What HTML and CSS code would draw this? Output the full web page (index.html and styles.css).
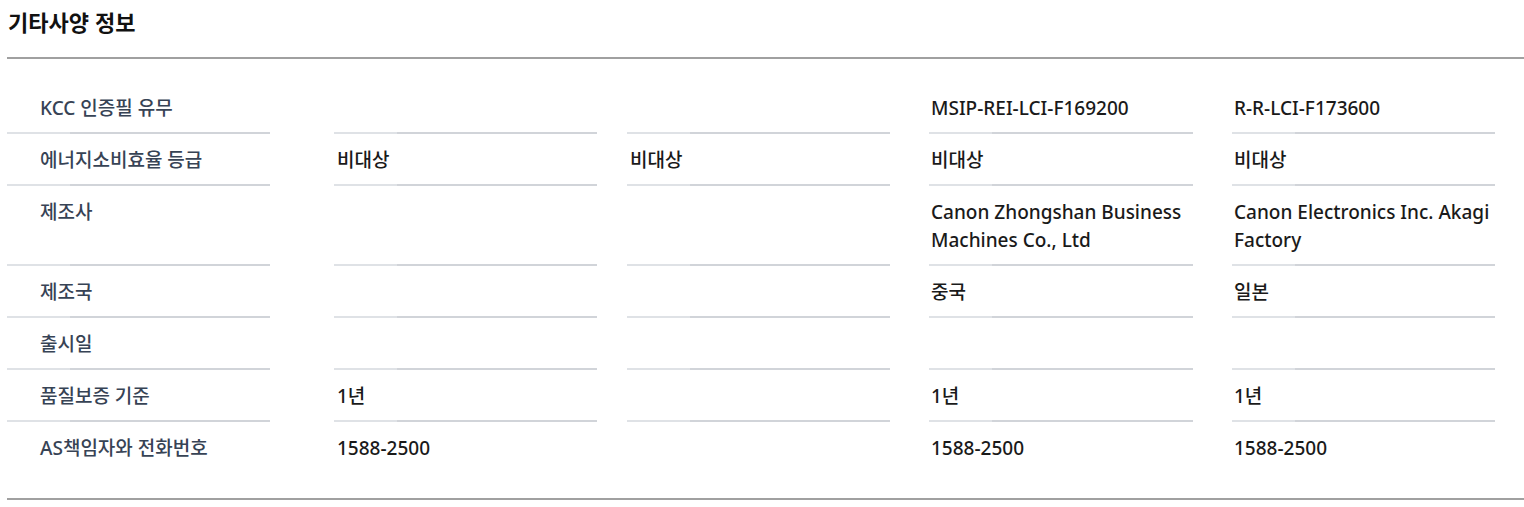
FILE: index.html
```html
<!DOCTYPE html>
<html lang="ko">
<head>
<meta charset="utf-8">
<title>기타사양 정보</title>
<link rel="stylesheet" href="styles.css">
</head>
<body>
<section class="spec">
  <h2 class="spec-title">기타사양 정보</h2>
  <div class="spec-table">
    <div class="row">
      <div class="cell label">KCC 인증필 유무</div>
      <div class="cell c2"></div>
      <div class="cell c3"></div>
      <div class="cell c4">MSIP-REI-LCI-F169200</div>
      <div class="cell c5">R-R-LCI-F173600</div>
    </div>
    <div class="row">
      <div class="cell label">에너지소비효율 등급</div>
      <div class="cell c2">비대상</div>
      <div class="cell c3">비대상</div>
      <div class="cell c4">비대상</div>
      <div class="cell c5">비대상</div>
    </div>
    <div class="row">
      <div class="cell label">제조사</div>
      <div class="cell c2"></div>
      <div class="cell c3"></div>
      <div class="cell c4">Canon Zhongshan Business Machines Co., Ltd</div>
      <div class="cell c5">Canon Electronics Inc. Akagi Factory</div>
    </div>
    <div class="row">
      <div class="cell label">제조국</div>
      <div class="cell c2"></div>
      <div class="cell c3"></div>
      <div class="cell c4">중국</div>
      <div class="cell c5">일본</div>
    </div>
    <div class="row">
      <div class="cell label">출시일</div>
      <div class="cell c2"></div>
      <div class="cell c3"></div>
      <div class="cell c4"></div>
      <div class="cell c5"></div>
    </div>
    <div class="row">
      <div class="cell label">품질보증 기준</div>
      <div class="cell c2">1년</div>
      <div class="cell c3"></div>
      <div class="cell c4">1년</div>
      <div class="cell c5">1년</div>
    </div>
    <div class="row last">
      <div class="cell label">AS책임자와 전화번호</div>
      <div class="cell c2">1588-2500</div>
      <div class="cell c3"></div>
      <div class="cell c4">1588-2500</div>
      <div class="cell c5">1588-2500</div>
    </div>
  </div>
</section>
</body>
</html>
```

FILE: styles.css
```css
html, body {
  margin: 0;
  padding: 0;
  background: #ffffff;
}

body {
  font-family: "Noto Sans", "Noto Sans CJK KR", sans-serif;
  color: #1a1a1a;
  overflow: hidden;
}

.spec {
  margin-left: 7px;
}

.spec-title {
  margin: 0;
  padding: 7px 0 22px 1px;
  font-family: "Noto Sans CJK KR", sans-serif;
  font-size: 22px;
  line-height: 28px;
  font-weight: 700;
  color: #111111;
  border-bottom: 2px solid #a0a0a0;
}

.spec-table {
  padding: 23px 0 26px;
  border-bottom: 2px solid #a0a0a0;
}

.row {
  display: flex;
}

.cell {
  box-sizing: border-box;
  width: 263px;
  flex: none;
  padding: 12px 0 10px 3px;
  font-size: 19px;
  line-height: 28px;
  font-weight: 500;
  border-bottom: 2px solid transparent;
  border-image: linear-gradient(to right, #dfe2e6 0, #dfe2e6 64px, #d1d4d9 64px, #d1d4d9 100%) 1;
}

.row.last .cell {
  border-bottom: 0;
  border-image: none;
}

.label {
  padding-left: 33px;
  color: #374355;
}

.c2 { margin-left: 64px; }
.c3 { margin-left: 30px; }
.c4 { margin-left: 39px; width: 264px; padding-left: 2px; }
.c5 { margin-left: 39px; padding-left: 2px; }
```
